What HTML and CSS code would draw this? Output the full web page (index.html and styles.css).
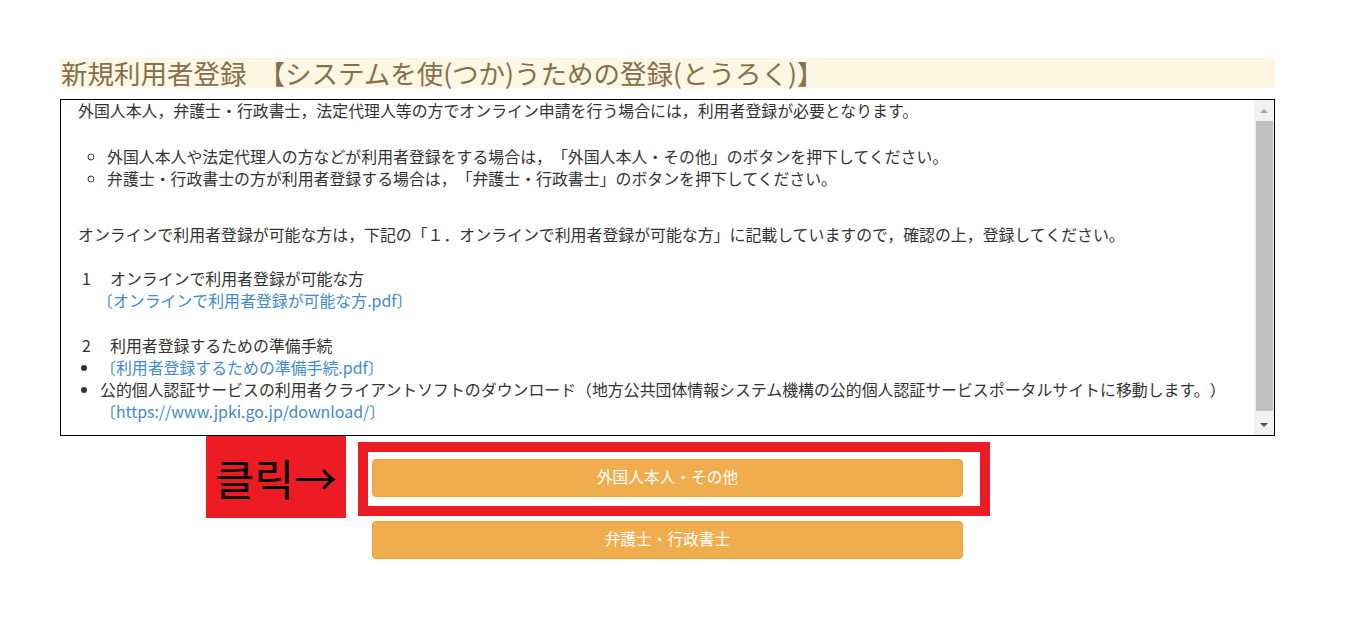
FILE: index.html
```html
<!DOCTYPE html>
<html lang="ja">
<head>
    <meta charset="UTF-8">
    <meta name="viewport" content="width=device-width, initial-scale=1.0">
    <title>新規利用者登録</title>
    <link rel="stylesheet" href="styles.css">
</head>
<body>
    <div class="page">
        <h1 class="title">新規利用者登録 【システムを使(つか)うための登録(とうろく)】</h1>

        <div class="info-box">
            <div class="info-content">
                <p class="lead">外国人本人，弁護士・行政書士，法定代理人等の方でオンライン申請を行う場合には，利用者登録が必要となります。</p>
                <ul class="circle-list">
                    <li>外国人本人や法定代理人の方などが利用者登録をする場合は，「外国人本人・その他」のボタンを押下してください。</li>
                    <li>弁護士・行政書士の方が利用者登録する場合は，「弁護士・行政書士」のボタンを押下してください。</li>
                </ul>
                <p class="notice">オンラインで利用者登録が可能な方は，下記の「１．オンラインで利用者登録が可能な方」に記載していますので，確認の上，登録してください。</p>

                <div class="section">
                    <p class="section-title"><span class="num">1</span>オンラインで利用者登録が可能な方</p>
                    <p class="file-link"><a href="#">〔オンラインで利用者登録が可能な方.pdf〕</a></p>
                </div>

                <div class="section">
                    <p class="section-title"><span class="num">2</span>利用者登録するための準備手続</p>
                    <ul class="disc-list">
                        <li><a href="#">〔利用者登録するための準備手続.pdf〕</a></li>
                        <li>公的個人認証サービスの利用者クライアントソフトのダウンロード（地方公共団体情報システム機構の公的個人認証サービスポータルサイトに移動します。）<br><a href="#">〔https://www.jpki.go.jp/download/〕</a></li>
                    </ul>
                </div>
            </div>

            <!-- スクロールバー -->
            <div class="scrollbar">
                <div class="scroll-btn"><span class="arrow-up"></span></div>
                <div class="scroll-track"><div class="scroll-thumb"></div></div>
                <div class="scroll-btn"><span class="arrow-down"></span></div>
            </div>
        </div>

        <div class="action-row">
            <div class="click-label">클릭→</div>
            <div class="highlight">
                <button class="reg-btn">外国人本人・その他</button>
            </div>
        </div>
        <div class="second-row">
            <button class="reg-btn">弁護士・行政書士</button>
        </div>
    </div>
</body>
</html>
```

FILE: styles.css
```css
body {
    margin: 0;
    font-family: "Noto Sans CJK JP", "Noto Sans", sans-serif;
    background-color: #fff;
    color: #333;
    text-spacing-trim: space-all;
}

.page {
    width: 1215px;
    margin-left: 60px;
    padding-top: 58px;
}

.title {
    margin: 0;
    height: 30px;
    line-height: 30px;
    background-color: #fdf6e3;
    color: #85704d;
    font-size: 26.5px;
    font-weight: normal;
    white-space: nowrap;
    padding-left: 1px;
    word-spacing: 6px;
}

.info-box {
    display: flex;
    margin-top: 11px;
    height: 335px;
    border: 1px solid #000;
    font-size: 15.9px;
    line-height: 22px;
}

.info-content {
    flex: 1;
    overflow: hidden;
    padding-left: 17px;
}

.info-content p {
    margin: 0;
}

.info-content a {
    color: #428bca;
    text-decoration: none;
}

.circle-list {
    list-style: circle;
    margin: 24px 0 0;
    padding-left: 29px;
}

.notice {
    margin-top: 34px !important;
}

.section {
    margin-top: 22px;
}

.section + .section {
    margin-top: 23px;
}

.section-title {
    padding-left: 4px;
}

.num {
    display: inline-block;
    width: 28px;
}

.file-link {
    padding-left: 19px;
}

.disc-list {
    list-style: disc;
    margin: 0;
    padding-left: 22px;
}

.scrollbar {
    display: flex;
    flex-direction: column;
    width: 20px;
    background-color: #f1f1f1;
}

.scroll-btn {
    height: 21px;
    display: flex;
    align-items: center;
    justify-content: center;
}

.arrow-up {
    border-left: 4px solid transparent;
    border-right: 4px solid transparent;
    border-bottom: 4px solid #a3a3a3;
}

.arrow-down {
    border-left: 4px solid transparent;
    border-right: 4px solid transparent;
    border-top: 4px solid #505050;
}

.scroll-track {
    flex: 1;
    padding: 0 1px 3px 2px;
    display: flex;
}

.scroll-thumb {
    flex: 1;
    background-color: #c1c1c1;
}

.action-row {
    display: flex;
    align-items: flex-start;
}

.click-label {
    margin-left: 146px;
    width: 140px;
    height: 82px;
    background-color: #ed1c24;
    color: #000;
    font-family: "Noto Sans CJK KR", sans-serif;
    font-size: 43px;
    line-height: 82px;
    text-align: center;
}

.highlight {
    margin: 6px 0 0 12px;
    border: 10px solid #ed1c24;
    padding: 7px 17px 9px 4px;
    line-height: 0;
}

.reg-btn {
    width: 591px;
    height: 38px;
    background-color: #f0ad4e;
    border: 1px solid #eea236;
    border-radius: 4px;
    color: #fff;
    font-family: "Noto Sans CJK JP", sans-serif;
    font-size: 15.7px;
    line-height: 20px;
    padding: 0 0 3px;
    cursor: pointer;
}

.second-row {
    margin: 3px 0 0 312px;
}
```
